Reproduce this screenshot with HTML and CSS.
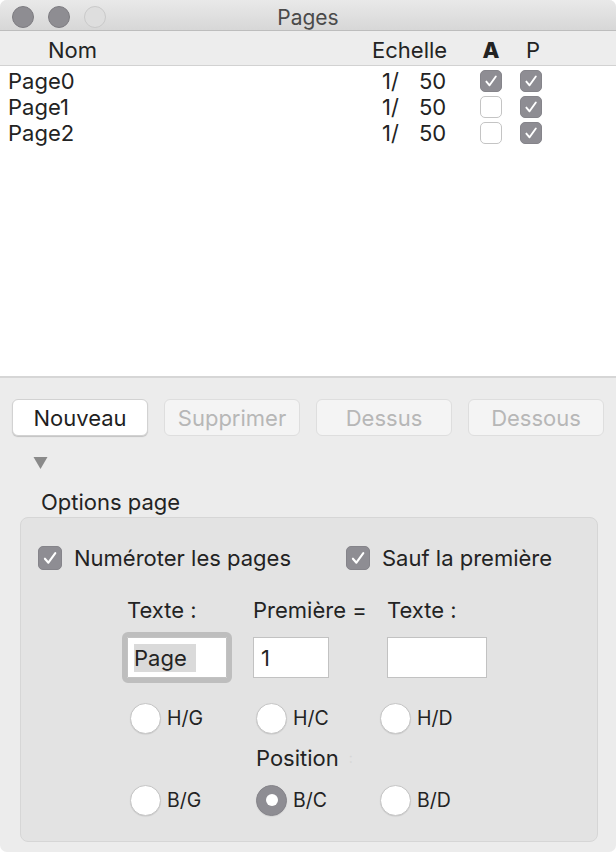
FILE: index.html
```html
<!DOCTYPE html>
<html lang="fr">
<head>
<meta charset="utf-8">
<title>Pages</title>
<link rel="stylesheet" href="styles.css">
</head>
<body>
<div class="window">
  <div class="titlebar">
    <div class="lights">
      <span class="light"></span>
      <span class="light"></span>
      <span class="light off"></span>
    </div>
    <div class="title">Pages</div>
    <div></div>
  </div>

  <div class="thead">
    <div class="h-name">Nom</div>
    <div class="h-scale">Echelle</div>
    <div class="h-a">A</div>
    <div class="h-p">P</div>
  </div>

  <div class="tbody">
    <div class="row">
      <div class="c-name">Page0</div>
      <div class="c-scale"><span class="s1">1/</span><span>50</span></div>
      <div class="c-chk"><span class="cb on"><svg viewBox="0 0 22 22"><path d="M5.9 11.7 L9.4 15.7 L16.3 6.1" /></svg></span></div>
      <div class="c-chk"><span class="cb on"><svg viewBox="0 0 22 22"><path d="M5.9 11.7 L9.4 15.7 L16.3 6.1" /></svg></span></div>
    </div>
    <div class="row">
      <div class="c-name">Page1</div>
      <div class="c-scale"><span class="s1">1/</span><span>50</span></div>
      <div class="c-chk"><span class="cb"></span></div>
      <div class="c-chk"><span class="cb on"><svg viewBox="0 0 22 22"><path d="M5.9 11.7 L9.4 15.7 L16.3 6.1" /></svg></span></div>
    </div>
    <div class="row">
      <div class="c-name">Page2</div>
      <div class="c-scale"><span class="s1">1/</span><span>50</span></div>
      <div class="c-chk"><span class="cb"></span></div>
      <div class="c-chk"><span class="cb on"><svg viewBox="0 0 22 22"><path d="M5.9 11.7 L9.4 15.7 L16.3 6.1" /></svg></span></div>
    </div>
  </div>

  <div class="bottom">
    <div class="buttons">
      <div class="btn primary">Nouveau</div>
      <div class="btn disabled">Supprimer</div>
      <div class="btn disabled">Dessus</div>
      <div class="btn disabled">Dessous</div>
    </div>
    <div class="disclosure"><svg viewBox="0 0 14 12"><path d="M0 0 H14 L7 12 Z"/></svg></div>
    <div class="group-label">Options page</div>
    <div class="group">
      <div class="checks">
        <label class="check"><span class="cb big on"><svg viewBox="0 0 22 22"><path d="M5.9 11.7 L9.4 15.7 L16.3 6.1" /></svg></span>Numéroter les pages</label>
        <label class="check second"><span class="cb big on"><svg viewBox="0 0 22 22"><path d="M5.9 11.7 L9.4 15.7 L16.3 6.1" /></svg></span>Sauf la première</label>
      </div>
      <div class="fields">
        <div class="f-label">Texte :</div>
        <div class="f-label">Première =</div>
        <div class="f-label">Texte :</div>
        <div class="field w1 focused"><span class="sel">Page</span></div>
        <div class="field w2">1</div>
        <div class="field w1"></div>
      </div>
      <div class="radios">
        <div class="radio"><span class="rb"></span>H/G</div>
        <div class="radio"><span class="rb"></span>H/C</div>
        <div class="radio r3"><span class="rb"></span>H/D</div>
        <div class="pos-label"><span>Position</span><span class="faint">:</span></div>
        <div class="radio"><span class="rb"></span>B/G</div>
        <div class="radio"><span class="rb on"></span>B/C</div>
        <div class="radio r3"><span class="rb"></span>B/D</div>
      </div>
    </div>
  </div>
</div>
</body>
</html>
```

FILE: styles.css
```css
html, body {
  margin: 0;
  padding: 0;
  background: #ffffff;
}
body {
  font-family: Inter, "Noto Sans", "Liberation Sans", sans-serif;
  font-size: 22px;
  color: #232323;
}
.window {
  width: 616px;
  height: 852px;
  background: #ececec;
  border-radius: 7px;
  overflow: hidden;
  display: flex;
  flex-direction: column;
}

/* title bar */
.titlebar {
  height: 31px;
  box-sizing: border-box;
  border-bottom: 1px solid #bdbdbd;
  background: linear-gradient(#e9e9e9, #d7d7d7);
  display: grid;
  grid-template-columns: 1fr auto 1fr;
  align-items: center;
}
.lights {
  display: flex;
  gap: 14px;
  padding-left: 12px;
}
.light {
  width: 20px;
  height: 20px;
  border-radius: 50%;
  background: #8e8d92;
  border: 1px solid #7d7c81;
}
.light.off {
  background: #dedede;
  border-color: #c9c9c9;
}
.title {
  color: #4a4a4a;
  font-size: 21px;
  line-height: 30px;
  padding-top: 3px;
}

/* table */
.thead {
  height: 35px;
  border-bottom: 1px solid #d2d2d2;
  background: #ededed;
  display: grid;
  grid-template-columns: 366px 105px 40px 40px 1fr;
  align-items: center;
  padding-top: 3px;
  box-sizing: border-box;
}
.h-name { padding-left: 48px; }
.h-scale { padding-left: 6px; }
.h-a { text-align: center; font-weight: 800; }
.h-p { text-align: center; padding-left: 4px; }

.tbody {
  background: #ffffff;
  height: 312px;
  border-bottom: 2px solid #d6d6d6;
  padding-top: 2px;
  box-sizing: border-box;
}
.row {
  height: 26px;
  display: grid;
  grid-template-columns: 366px 105px 40px 40px 1fr;
  align-items: center;
}
.c-name { padding-left: 8px; }
.c-scale { display: flex; padding-left: 16px; }
.c-scale .s1 { width: 37px; }
.c-chk { display: flex; justify-content: center; }

.cb {
  width: 22px;
  height: 22px;
  box-sizing: border-box;
  border-radius: 5px;
  background: #ffffff;
  border: 1px solid #c4c4c4;
  display: inline-flex;
  flex: none;
}
.cb.on {
  background: #8e8d93;
  border-color: #85848a;
}
.cb svg {
  width: 100%;
  height: 100%;
}
.cb svg path {
  fill: none;
  stroke: #ffffff;
  stroke-width: 2.1;
  stroke-linecap: round;
  stroke-linejoin: round;
}
.cb.big {
  width: 24px;
  height: 24px;
}

/* bottom part */
.bottom {
  padding: 21px 12px 0;
  flex: 1;
  display: flex;
  flex-direction: column;
}
.buttons {
  display: grid;
  grid-template-columns: repeat(4, 136px);
  gap: 16px;
}
.btn {
  height: 37px;
  box-sizing: border-box;
  border-radius: 6px;
  display: flex;
  align-items: center;
  justify-content: center;
}
.btn.primary {
  background: #ffffff;
  color: #1f1f1f;
  border: 1px solid #d2d2d2;
  box-shadow: 0 1px 1px rgba(0,0,0,0.18);
}
.btn.disabled {
  background: #f4f4f4;
  color: #b7b7b7;
  border: 1px solid #dedede;
}
.disclosure {
  margin: 21px 0 0 21px;
  width: 15px;
  height: 12px;
}
.disclosure svg {
  display: block;
  width: 15px;
  height: 12px;
  fill: #8a8a8a;
}
.group-label {
  margin: 20px 0 0 29px;
  line-height: 26px;
}
.group {
  margin: 2px 6px 0 8px;
  height: 325px;
  box-sizing: border-box;
  background: #e3e3e3;
  border: 1px solid #d6d6d6;
  border-radius: 8px;
  padding-top: 28px;
}
.checks {
  display: flex;
  padding-left: 17px;
}
.check {
  display: flex;
  align-items: center;
  gap: 12px;
  height: 24px;
}
.check.second {
  margin-left: 55px;
}
.fields {
  margin-top: 27px;
  padding-left: 106px;
  display: grid;
  grid-template-columns: 126px 134px auto;
  grid-template-rows: 26px 41px;
  row-gap: 14px;
  align-items: center;
}
.f-label {
  line-height: 26px;
}
.field {
  height: 41px;
  box-sizing: border-box;
  background: #ffffff;
  border: 1px solid #c2c2c2;
  display: flex;
  align-items: center;
  padding-left: 6px;
}
.field.w1 { width: 100px; }
.field.w2 { width: 76px; padding-left: 7px; }
.field.focused {
  outline: 5px solid #bebebe;
  border-radius: 1px;
}
.sel {
  background: #dadada;
  padding-right: 9px;
  line-height: 28px;
}
.radios {
  margin-top: 24px;
  padding-left: 109px;
  display: grid;
  grid-template-columns: 126px 124px auto;
  grid-template-rows: 32px 26px 32px;
  row-gap: 12px;
  align-items: center;
}
.radio {
  display: flex;
  align-items: center;
  gap: 6px;
  font-size: 19.5px;
}
.rb {
  width: 31px;
  height: 31px;
  box-sizing: border-box;
  border-radius: 50%;
  background: #ffffff;
  border: 1px solid #c6c6c6;
  box-shadow: 0 0.5px 1px rgba(0,0,0,0.12);
  display: flex;
  align-items: center;
  justify-content: center;
  flex: none;
}
.rb.on {
  background: #8e8d93;
  border-color: #86858b;
}
.rb.on::after {
  content: "";
  width: 12px;
  height: 12px;
  border-radius: 50%;
  background: #ffffff;
}
.pos-label {
  grid-column: 2 / 4;
  display: flex;
  gap: 10px;
  line-height: 26px;
  margin-top: -2px;
}
.faint {
  color: #d6d6d6;
  font-size: 14px;
}
```
